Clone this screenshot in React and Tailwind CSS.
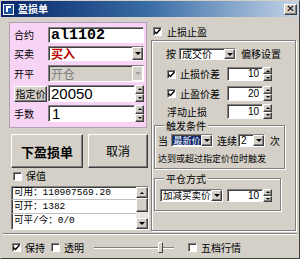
import React from 'react';

const cjk = { fontFamily: '"Noto Sans CJK SC", sans-serif' };

// 3D borde hundido estilo Windows clásico
const Sunken = ({ className = '', children }) => (
    <div className={`shrink-0 border border-t-[#808080] border-l-[#808080] border-b-white border-r-white shadow-[inset_1px_1px_0_#404040] ${className}`}>
        {children}
    </div>
);

const Raised = ({ className = '', children }) => (
    <div className={`bg-[#d4d0c8] border border-t-white border-l-white border-b-[#404040] border-r-[#404040] shadow-[inset_-1px_-1px_0_#808080] flex items-center justify-center ${className}`}>
        {children}
    </div>
);

const Down = () => (
    <div className="w-0 h-0 border-l-[3px] border-r-[3px] border-t-[3px] border-l-transparent border-r-transparent border-t-black" />
);
const Up = () => (
    <div className="w-0 h-0 border-l-[2px] border-r-[2px] border-b-[2px] border-l-transparent border-r-transparent border-b-black" />
);

const Arrow = () => (
    <Raised className="w-[11px] h-full shrink-0">
        <Down />
    </Raised>
);

const Spin = () => (
    <div className="flex flex-col w-[9px] h-full shrink-0">
        <Raised className="flex-1"><Up /></Raised>
        <Raised className="flex-1">
            <div className="w-0 h-0 border-l-[2px] border-r-[2px] border-t-[2px] border-l-transparent border-r-transparent border-t-black" />
        </Raised>
    </div>
);

const Check = ({ checked }) => (
    <Sunken className="w-[9px] h-[9px] bg-white flex items-center justify-center">
        {checked && (
            <svg width="7" height="7" viewBox="0 0 7 7">
                <path d="M0.5 3.5 L2.5 5.5 L6.5 1" stroke="black" strokeWidth="1.4" fill="none" />
            </svg>
        )}
    </Sunken>
);

const Select = ({ className = '', children, textClass = '' }) => (
    <Sunken className={`bg-white flex items-center ${className}`}>
        <div className={`flex-1 min-w-0 pl-[2px] leading-none ${textClass}`}>{children}</div>
        <Arrow />
    </Sunken>
);

const NumBox = ({ value }) => (
    <div className="flex h-full shrink-0">
        <Sunken className="w-[36px] bg-white flex items-center justify-end pr-[3px] text-[10px] leading-none">
            <span style={{ fontFamily: '"Liberation Sans", sans-serif' }}>{value}</span>
        </Sunken>
        <Spin />
    </div>
);

const Group = ({ label, className = '', children }) => (
    <div className={`relative shrink-0 border border-[#808080] shadow-[inset_1px_1px_0_#fff,1px_1px_0_#fff] ${className}`}>
        {label && (
            <div className="absolute -top-[5px] left-[9px] px-[2px] bg-[#d4d0c8] text-[10px] leading-[10px]">{label}</div>
        )}
        {children}
    </div>
);

const App = () => {
    return (
        <div className="w-[300px] h-[259px] bg-[#d4d0c8] flex flex-col whitespace-nowrap border border-t-[#d4d0c8] border-l-[#d4d0c8] border-b-[#404040] border-r-[#404040] overflow-hidden text-black" style={cjk}>
            {/* Barra de título */}
            <div className="h-[16px] shrink-0 flex items-center bg-linear-to-r from-[#0a246a] via-[#3a6ea5] to-[#c4d4e8] px-[2px]">
                <div className="w-[11px] h-[11px] bg-[#2050a0] border border-white flex items-center justify-center">
                    <div className="w-[5px] h-[6px] border-l-2 border-t-2 border-white" />
                </div>
                <span className="ml-[4px] text-white font-bold text-[10px] leading-none">盈损单</span>
                <Raised className="ml-auto w-[13px] h-[11px]">
                    <span className="text-[10px] font-bold leading-none" style={{ fontFamily: '"DejaVu Sans", sans-serif' }}>✕</span>
                </Raised>
            </div>

            <div className="flex h-[215px] shrink-0">
                {/* Columna izquierda */}
                <div className="w-[149px] shrink-0 flex flex-col">
                    <div className="mt-[5px] ml-[8px] w-[138px] h-[106px] bg-[#f7d3f5] border border-[#b0a0b0] flex flex-col pl-[4px] pt-[4px]">
                        <div className="flex items-center h-[16px]">
                            <span className="w-[34px] shrink-0 text-[10px] leading-none">合约</span>
                            <Sunken className="w-[96px] h-full bg-white flex items-center pl-[2px]">
                                <span className="text-[15px] font-bold leading-none" style={{ fontFamily: '"Liberation Mono", monospace' }}>al1102</span>
                            </Sunken>
                        </div>
                        <div className="flex items-center h-[15px] mt-[3px]">
                            <span className="w-[34px] shrink-0 text-[10px] leading-none">买卖</span>
                            <Select className="w-[96px] h-full" textClass="text-[12px] font-bold text-[#c00000]">买入</Select>
                        </div>
                        <div className="flex items-center h-[17px] mt-[4px]">
                            <span className="w-[34px] shrink-0 text-[10px] leading-none">开平</span>
                            <Sunken className="w-[96px] h-full bg-[#d4d0c8] flex items-center">
                                <div className="flex-1 pl-[2px] text-[12px] leading-none text-[#808080]">开仓</div>
                                <div className="w-[11px] h-full bg-[#d4d0c8] border border-[#ffffff] flex items-center justify-center">
                                    <div className="w-0 h-0 border-l-[3px] border-r-[3px] border-t-[3px] border-l-transparent border-r-transparent border-t-[#a0a0a0]" />
                                </div>
                            </Sunken>
                        </div>
                        <div className="flex items-center h-[17px] mt-[3px]">
                            <Raised className="w-[33px] h-[16px] mr-[1px] shrink-0">
                                <span className="text-[10px] leading-none">指定价</span>
                            </Raised>
                            <Sunken className="w-[87px] h-full bg-white flex items-center pl-[2px]">
                                <span className="text-[15px] leading-none" style={{ fontFamily: '"Liberation Sans", sans-serif' }}>20050</span>
                            </Sunken>
                            <Spin />
                        </div>
                        <div className="flex items-center h-[17px] mt-[3px]">
                            <span className="w-[34px] shrink-0 text-[10px] leading-none">手数</span>
                            <Sunken className="w-[87px] h-full bg-white flex items-center pl-[3px]">
                                <span className="text-[15px] leading-none" style={{ fontFamily: '"Liberation Sans", sans-serif' }}>1</span>
                            </Sunken>
                            <Spin />
                        </div>
                    </div>

                    {/* Botones */}
                    <div className="flex mt-[6px] ml-[10px] gap-[5px]">
                        <Raised className="w-[72px] h-[34px]">
                            <span className="text-[13px] font-bold leading-none">下盈损单</span>
                        </Raised>
                        <Raised className="w-[60px] h-[34px]">
                            <span className="text-[12px] leading-none">取消</span>
                        </Raised>
                    </div>

                    <div className="flex items-center mt-[3px] ml-[12px] h-[10px]">
                        <Check />
                        <span className="ml-[4px] text-[10px] leading-none">保值</span>
                    </div>

                    {/* Lista de fondos */}
                    <Sunken className="mt-[5px] ml-[10px] w-[138px] h-[44px] bg-white flex">
                        <div className="flex-1 flex flex-col text-[9.5px] leading-none" style={{ fontFamily: '"Liberation Mono", "Noto Sans CJK SC", monospace' }}>
                            <div className="h-[13px] flex items-center pl-[2px] border-b border-[#c0c0c0]">可用：110907569.20</div>
                            <div className="h-[14px] flex items-center pl-[2px] border-b border-[#c0c0c0]">可开：1382</div>
                            <div className="h-[14px] flex items-center pl-[2px]">可平/今：0/0</div>
                        </div>
                        <div className="w-[12px] flex flex-col bg-[#e8e6e2]">
                            <Raised className="h-[11px]"><Up /></Raised>
                            <Raised className="h-[14px]" />
                            <div className="flex-1" />
                            <Raised className="h-[11px]"><Down /></Raised>
                        </div>
                    </Sunken>
                </div>

                {/* Columna derecha */}
                <div className="flex-1 flex flex-col">
                    <div className="flex items-center mt-[10px] ml-[3px] h-[9px]">
                        <Check checked />
                        <span className="ml-[5px] text-[10px] leading-none">止损止盈</span>
                    </div>

                    <Group className="mt-[4px] ml-[1px] w-[145px] h-[191px] flex flex-col">
                        <div className="flex items-center h-[12px] mt-[7px] ml-[14px]">
                            <span className="text-[10px] leading-none">按</span>
                            <Select className="ml-[3px] w-[57px] h-full" textClass="text-[10px]">成交价</Select>
                            <span className="ml-[5px] text-[10px] leading-none">偏移设置</span>
                        </div>
                        <div className="flex items-center h-[14px] mt-[7px] ml-[15px]">
                            <Check checked />
                            <span className="ml-[4px] w-[47px] shrink-0 text-[10px] leading-none">止损价差</span>
                            <NumBox value="10" />
                        </div>
                        <div className="flex items-center h-[15px] mt-[5px] ml-[15px]">
                            <Check checked />
                            <span className="ml-[4px] w-[47px] shrink-0 text-[10px] leading-none">止盈价差</span>
                            <NumBox value="20" />
                        </div>
                        <div className="flex items-center h-[15px] mt-[3px] ml-[15px]">
                            <span className="w-[60px] shrink-0 text-[10px] leading-none">浮动止损</span>
                            <NumBox value="10" />
                        </div>

                        <Group label="触发条件" className="mt-[6px] ml-[2px] w-[131px] h-[44px] flex flex-col">
                            <div className="flex items-center h-[13px] mt-[8px] ml-[3px]">
                                <span className="text-[10px] leading-none">当</span>
                                <Sunken className="ml-[3px] w-[42px] h-full bg-white flex items-center">
                                    <div className="flex-1 min-w-0 ml-[1px] h-[9px] bg-[#0a246a] text-white text-[9px] leading-[9px] text-center">最新价</div>
                                    <Arrow />
                                </Sunken>
                                <span className="ml-[4px] text-[10px] leading-none">连续</span>
                                <Select className="ml-[1px] w-[27px] h-full" textClass="text-[10px]">
                                    <span style={{ fontFamily: '"Liberation Sans", sans-serif' }}>2</span>
                                </Select>
                                <span className="ml-[5px] text-[10px] leading-none">次</span>
                            </div>
                            <div className="mt-[7px] ml-[3px] text-[9px] leading-none">达到或超过指定价位时触发</div>
                        </Group>

                        <Group label="平仓方式" className="mt-[9px] ml-[2px] w-[127px] h-[33px] flex flex-col">
                            <div className="flex items-center h-[13px] mt-[10px] ml-[5px]">
                                <Select className="w-[63px] h-full" textClass="text-[9.5px]">加减买卖价</Select>
                                <div className="ml-[4px] h-full">
                                    <NumBox value="10" />
                                </div>
                            </div>
                        </Group>
                    </Group>
                </div>
            </div>

            {/* Separador */}
            <div className="mt-[1px] mx-[2px] border-t border-[#808080] border-b border-b-white" />

            {/* Fila inferior */}
            <div className="flex items-center mt-[7px] h-[11px]">
                <div className="ml-[11px]"><Check checked /></div>
                <span className="ml-[4px] text-[10px] leading-none">保持</span>
                <div className="ml-[6px]"><Check /></div>
                <span className="ml-[4px] text-[10px] leading-none">透明</span>
                <div className="relative ml-[10px] w-[80px] h-[11px] flex items-center">
                    <div className="w-full h-[2px] border-t border-[#808080] border-b border-b-white" />
                    <div className="absolute left-[64px] top-0 w-[5px] h-[11px] bg-[#d4d0c8] border border-t-white border-l-white border-b-[#404040] border-r-[#404040]" />
                </div>
                <div className="ml-[14px]"><Check /></div>
                <span className="ml-[4px] text-[10px] leading-none">五档行情</span>
            </div>
        </div>
    );
};

export default App;
